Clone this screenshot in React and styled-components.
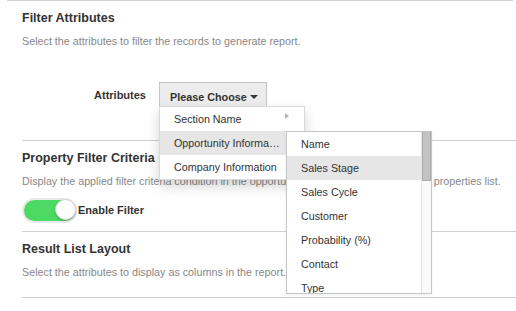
import React from 'react';
import styled, { createGlobalStyle } from 'styled-components';

const GlobalStyle = createGlobalStyle`
    html, body {
        margin: 0;
        padding: 0;
        background: #fff;
        font-family: "Liberation Sans", Arial, Helvetica, sans-serif;
        color: #333;
    }
`;

const Frame = styled.div`
    margin: 0 3px 0 7px;
    border-top: 1px solid #cfcfcf;
`;

const Section = styled.section`
    margin: 0 -3px 0 15px;
    padding: 9px 0 ${(p) => p.$bottom}px;
    border-bottom: 1px solid #cfcfcf;
`;

const Title = styled.h3`
    margin: 0;
    font-size: 12.5px;
    line-height: 16px;
    font-weight: bold;
    color: #333;
`;

const Desc = styled.p`
    margin: 7px 0 0;
    font-size: 10.75px;
    line-height: 16px;
    color: #888;
    white-space: nowrap;
`;

const FieldRow = styled.div`
    display: flex;
    align-items: center;
    margin-top: 33px;
    height: 25px;
`;

const FieldLabel = styled.label`
    width: 124px;
    margin-right: 13px;
    text-align: right;
    font-size: 11px;
    font-weight: bold;
    color: #333;
`;

const Dropdown = styled.div`
    position: relative;
`;

const ChooseButton = styled.button`
    box-sizing: border-box;
    height: 25px;
    padding: 3px 8px 0 10px;
    border: 1px solid #c4c4c4;
    border-bottom: none;
    background: #ececec;
    font-family: inherit;
    font-size: 10.8px;
    line-height: 20px;
    font-weight: bold;
    color: #333;
    display: flex;
    align-items: center;
`;

const DownCaret = styled.span`
    display: inline-block;
    margin-left: 3px;
    margin-top: 1px;
    border-top: 4px solid #333;
    border-left: 4px solid transparent;
    border-right: 4px solid transparent;
`;

const Menu = styled.ul`
    position: absolute;
    top: 24px;
    left: 0;
    box-sizing: border-box;
    width: 146px;
    margin: 0;
    padding: 0;
    list-style: none;
    background: #fff;
    border: 1px solid rgba(0, 0, 0, 0.15);
    box-shadow: 0 6px 12px rgba(0, 0, 0, 0.175);
    z-index: 10;
`;

const MenuItem = styled.li`
    position: relative;
    display: flex;
    height: 24px;
    padding: 0 15px 0 14px;
    font-size: 10.75px;
    line-height: 24px;
    color: #333;
    background: ${(p) => (p.$active ? '#e6e6e6' : 'transparent')};
`;

const ItemText = styled.span`
    flex: 1;
    min-width: 0;
    margin-right: 9px;
    overflow: hidden;
    white-space: nowrap;
    text-overflow: ellipsis;
`;

const RightCaret = styled.span`
    align-self: flex-start;
    margin-top: 6px;
    width: 0;
    height: 0;
    border-left: 4px solid #b5b5b5;
    border-top: 3px solid transparent;
    border-bottom: 3px solid transparent;
`;

const SubMenu = styled.div`
    position: absolute;
    top: 0;
    left: 126px;
    box-sizing: border-box;
    width: 146px;
    height: 163px;
    display: flex;
    background: #fff;
    border: 1px solid #c6c6c6;
    box-shadow: 0 2px 4px rgba(0, 0, 0, 0.06);
    z-index: 11;
`;

const SubList = styled.ul`
    flex: 1;
    margin: 0;
    padding: 0;
    list-style: none;
    overflow: hidden;
`;

const SubItem = styled.li`
    height: 24px;
    padding-left: 14px;
    font-size: 10.75px;
    line-height: 24px;
    color: #333;
    white-space: nowrap;
    background: ${(p) => (p.$active ? '#e6e6e6' : 'transparent')};
`;

const ScrollTrack = styled.div`
    width: 9px;
    border-left: 1px solid #e4e4e4;
    background: #fafafa;
`;

const ScrollThumb = styled.div`
    box-sizing: border-box;
    height: 49px;
    background: #c3c3c3;
    border: 1px solid #ababab;
    border-top: none;
`;

const ToggleRow = styled.div`
    display: flex;
    align-items: center;
    margin-top: 9px;
    height: 24px;
`;

const Switch = styled.span`
    position: relative;
    box-sizing: border-box;
    width: 55px;
    height: 25px;
    border-radius: 13px;
    border: 2px solid #e9e9e9;
    background: #4cd964;
    flex-shrink: 0;
`;

const Knob = styled.span`
    position: absolute;
    top: -1px;
    right: -1px;
    box-sizing: border-box;
    width: 21px;
    height: 21px;
    border-radius: 50%;
    background: #fdfdfd;
    border: 1px solid #d6d6d6;
    box-shadow: 0 1px 2px rgba(0, 0, 0, 0.25);
`;

const ToggleLabel = styled.span`
    margin-left: 1px;
    font-size: 11px;
    font-weight: bold;
    color: #333;
`;

const sectionItems = ['Section Name', 'Opportunity Information', 'Company Information'];
const opportunityFields = [
    'Name',
    'Sales Stage',
    'Sales Cycle',
    'Customer',
    'Probability (%)',
    'Contact',
    'Type',
    'Amount',
];

const App = () => {
    return (
        <>
            <GlobalStyle />
            <Frame>
                <Section $bottom={33}>
                    <Title>Filter Attributes</Title>
                    <Desc>Select the attributes to filter the records to generate report.</Desc>
                    <FieldRow>
                        <FieldLabel>Attributes</FieldLabel>
                        <Dropdown>
                            <ChooseButton>
                                Please Choose <DownCaret />
                            </ChooseButton>
                            <Menu>
                                {sectionItems.map((item, i) => (
                                    <MenuItem key={item} $active={i === 1}>
                                        <ItemText>{item}</ItemText>
                                        {i === 0 && <RightCaret />}
                                        {i === 1 && (
                                            <SubMenu>
                                                <SubList>
                                                    {opportunityFields.map((f, j) => (
                                                        <SubItem key={f} $active={j === 1}>{f}</SubItem>
                                                    ))}
                                                </SubList>
                                                <ScrollTrack>
                                                    <ScrollThumb />
                                                </ScrollTrack>
                                            </SubMenu>
                                        )}
                                    </MenuItem>
                                ))}
                            </Menu>
                        </Dropdown>
                    </FieldRow>
                </Section>
                <Section $bottom={9}>
                    <Title>Property Filter Criteria</Title>
                    <Desc>Display the applied filter criteria condition in the opportunity report with all the selected properties list.</Desc>
                    <ToggleRow>
                        <Switch>
                            <Knob />
                        </Switch>
                        <ToggleLabel>Enable Filter</ToggleLabel>
                    </ToggleRow>
                </Section>
                <Section $bottom={17}>
                    <Title>Result List Layout</Title>
                    <Desc>Select the attributes to display as columns in the report.</Desc>
                </Section>
            </Frame>
        </>
    );
};

export default App;
